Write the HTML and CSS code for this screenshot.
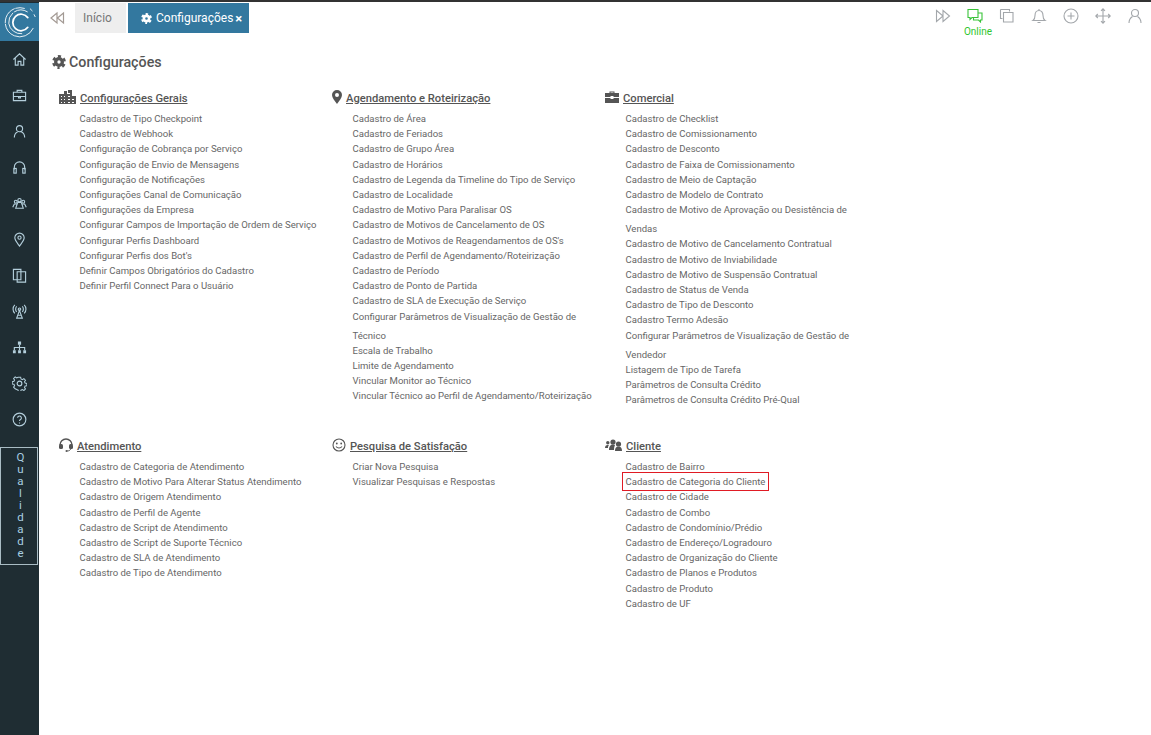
FILE: index.html
```html
<!DOCTYPE html>
<html lang="pt-BR">
<head>
    <meta charset="UTF-8">
    <meta name="viewport" content="width=device-width, initial-scale=1.0">
    <title>Configurações</title>
    <link rel="stylesheet" href="styles.css">
</head>
<body>
    <svg class="icon-defs" width="0" height="0">
        <symbol id="gear" viewBox="0 0 16 16">
            <circle cx="8" cy="8" r="3.800" fill="none" stroke="currentColor" stroke-width="3.800"/>
            <circle cx="8" cy="8" r="6.500" fill="none" stroke="currentColor" stroke-width="2.800" stroke-dasharray="3.600 3.207" stroke-dashoffset="1.800" transform="rotate(90 8 8)"/>
        </symbol>
    </svg>

    <aside class="sidebar">
        <div class="logo">
            <svg viewBox="0 0 39 39" width="38" height="38" fill="none" stroke="#fff" stroke-linecap="round">
                <path d="M24 5.500A15 15 0 1 0 33 26" stroke-width=".9" stroke-dasharray="9 1.500 18 1.500 40 2"/>
                <path d="M27 9A12.500 12.500 0 0 0 8 21a12.500 12.500 0 0 0 20 8" stroke-width=".9" stroke-dasharray="14 2 30"/>
                <path d="M27.500 15A8.500 8.500 0 1 0 27.500 25" stroke-width="1.800"/>
                <path d="M30 6l2 2M34 12l1 2" stroke-width=".9"/>
            </svg>
        </div>
        <nav class="side-nav">
            <a class="side-item"><svg viewBox="0 0 16 16"><path d="M1.500 8L8 2l6.500 6M3.500 6.500V14h3v-4h3v4h3V6.500"/></svg></a>
            <a class="side-item"><svg viewBox="0 0 16 16"><path d="M1.500 4.500h13v9h-13zM5.500 4.500V2.500h5v2M1.500 9h13M7 9v1.500h2V9"/></svg></a>
            <a class="side-item"><svg viewBox="0 0 16 16"><circle cx="8" cy="5" r="3.300"/><path d="M2.500 14.500c0-4 2-5.500 3.500-6M13.500 14.500c0-4-2-5.500-3.500-6"/></svg></a>
            <a class="side-item"><svg viewBox="0 0 16 16"><path d="M2.500 10V7.500a5.500 5.500 0 0 1 11 0V10"/><rect x="2" y="9" width="2.500" height="5"/><rect x="11.500" y="9" width="2.500" height="5"/></svg></a>
            <a class="side-item"><svg viewBox="0 0 16 16"><circle cx="8" cy="4.500" r="1.800"/><circle cx="4" cy="6" r="1.500"/><circle cx="12" cy="6" r="1.500"/><path d="M.8 12l1.700-3.500h3L4 13h8l-1.500-4.500h3l1.700 3.500M5.500 8l1-1.200h3l1 1.200"/></svg></a>
            <a class="side-item"><svg viewBox="0 0 16 16"><path d="M8 15C5 11 3 8.800 3 6.200a5 5 0 0 1 10 0C13 8.800 11 11 8 15z"/><circle cx="8" cy="6" r="1.700"/></svg></a>
            <a class="side-item"><svg viewBox="0 0 16 16"><path d="M1.500 1.500h8v11h-8z"/><path d="M5.500 4h9v11h-9z"/></svg></a>
            <a class="side-item"><svg viewBox="0 0 16 16"><path d="M8 7l-3 8h6zM6 12h4"/><circle cx="8" cy="5.500" r="1.300"/><path d="M5 2.500c-1.500 1.500-1.500 4.500 0 6M11 2.500c1.500 1.500 1.500 4.500 0 6M3 1c-2.500 2.500-2.500 6.500 0 9M13 1c2.500 2.500 2.500 6.500 0 9"/></svg></a>
            <a class="side-item"><svg viewBox="0 0 16 16"><path d="M8 5v3M2.500 11V8h11v3M8 8v3"/><path class="solid" d="M6.300 1.500h3.400V5H6.300zM1 11h3v3H1zM6.500 11h3v3h-3zM12 11h3v3h-3z"/></svg></a>
            <a class="side-item"><svg viewBox="0 0 16 16"><circle cx="8" cy="8" r="2.500"/><path d="M6.700 1h2.600l.4 2 1.500.7 1.800-1.100 1.800 1.800-1.100 1.800.7 1.500 2 .4v2.600l-2 .4-.7 1.500 1.100 1.800-1.800 1.800-1.800-1.100-1.500.7-.4 2H6.700l-.4-2-1.500-.7L3 14.200l-1.800-1.800 1.100-1.800-.7-1.500-2-.4V6.100l2-.4.7-1.500-1.100-1.800L3 .6l1.800 1.100 1.500-.7z" transform="translate(.6 .4) scale(.93)"/></svg></a>
            <a class="side-item"><svg viewBox="0 0 16 16"><circle cx="8" cy="8" r="6.800"/><path d="M6 6.200a2 2 0 1 1 3 1.800c-.8.500-1 .9-1 1.700M8 11.200v1"/></svg></a>
        </nav>
        <a class="side-quality">
            <span>Q</span><span>u</span><span>a</span><span>l</span><span>i</span><span>d</span><span>a</span><span>d</span><span>e</span>
        </a>
    </aside>

    <div class="content">
        <header class="topbar">
            <a class="back-btn">
                <svg viewBox="0 0 16 16" width="16" height="16"><path d="M8 3L2 8l6 5zM14.500 3l-6 5 6 5z"/></svg>
            </a>
            <a class="tab">Início</a>
            <a class="tab tab-active">
                <svg class="gear-icon" width="11" height="11"><use href="#gear"/></svg>
                <span>Configurações</span>
                <b class="tab-close">×</b>
            </a>
            <div class="top-actions">
                <a class="action"><svg viewBox="0 0 16 16"><path d="M1.500 2.500l6.500 5.500-6.500 5.500zM8 2.500l6.500 5.500L8 13.500z"/></svg></a>
                <a class="action action-online">
                    <svg viewBox="0 0 16 16"><path d="M1 1.500h10v8H5l-2 2v-2H1z"/><path d="M11 5h4v7h-1.500v2l-2-2H6.500v-2.500"/></svg>
                    <span>Online</span>
                </a>
                <a class="action"><svg viewBox="0 0 16 16"><path d="M1.500 1.500h9v2M1.500 1.500v9h2"/><path d="M4.500 4.500h9.500v9.500H4.500z"/></svg></a>
                <a class="action"><svg viewBox="0 0 16 16"><path d="M2 12.500h12c-1.500-1-2-2-2-5 0-3-1.500-5-4-5s-4 2-4 5c0 3-.5 4-2 5zM8 1v1.500M6.500 14.500h3"/></svg></a>
                <a class="action"><svg viewBox="0 0 16 16"><circle cx="8" cy="8" r="7"/><path d="M8 4.500v7M4.500 8h7"/></svg></a>
                <a class="action"><svg viewBox="0 0 16 16"><path d="M8 .8v14.400M.8 8h14.400M6 2.800L8 .8l2 2M6 13.200l2 2 2-2M2.800 6l-2 2 2 2M13.200 6l2 2-2 2"/></svg></a>
                <a class="action"><svg viewBox="0 0 16 16"><circle cx="8" cy="5" r="3.500"/><path d="M2 15c0-4 2-5.500 3.500-6.500M14 15c0-4-2-5.500-3.500-6.500"/></svg></a>
            </div>
        </header>

        <main class="page">
            <h1 class="page-title"><svg class="gear-icon" width="14" height="14"><use href="#gear"/></svg>Configurações</h1>

            <div class="sections">
                <section class="section">
                    <h2 class="section-title">
                        <svg viewBox="0 0 17 14" width="17" height="14"><path d="M1 4h4V1h3v3h1V0h4v6h4v8H0V4zm1 2v1h1V6zm0 3v1h1V9zm0 3v1h1v-1zm3-6v1h1V6zm0 3v1h1V9zm0 3v1h1v-1zm4-9v1h2V3zm0 3v1h2V6zm0 3v1h2V9zm0 3v1h2v-1zm4-3v1h2V9zm0 3v1h2v-1z" fill-rule="evenodd"/></svg>
                        <span>Configurações Gerais</span>
                    </h2>
                    <ul class="link-list">
                        <li><a>Cadastro de Tipo Checkpoint</a></li>
                        <li><a>Cadastro de Webhook</a></li>
                        <li><a>Configuração de Cobrança por Serviço</a></li>
                        <li><a>Configuração de Envio de Mensagens</a></li>
                        <li><a>Configuração de Notificações</a></li>
                        <li><a>Configurações Canal de Comunicação</a></li>
                        <li><a>Configurações da Empresa</a></li>
                        <li><a>Configurar Campos de Importação de Ordem de Serviço</a></li>
                        <li><a>Configurar Perfis Dashboard</a></li>
                        <li><a>Configurar Perfis dos Bot's</a></li>
                        <li><a>Definir Campos Obrigatórios do Cadastro</a></li>
                        <li><a>Definir Perfil Connect Para o Usuário</a></li>
                    </ul>
                </section>

                <section class="section">
                    <h2 class="section-title title-narrow">
                        <svg viewBox="0 0 10 14" width="10" height="14"><path d="M5 0a5 5 0 0 1 5 5c0 2.500-2.500 5.500-5 9-2.500-3.500-5-6.500-5-9a5 5 0 0 1 5-5zm0 3a2 2 0 1 0 0 4 2 2 0 0 0 0-4z" fill-rule="evenodd"/></svg>
                        <span>Agendamento e Roteirização</span>
                    </h2>
                    <ul class="link-list">
                        <li><a>Cadastro de Área</a></li>
                        <li><a>Cadastro de Feriados</a></li>
                        <li><a>Cadastro de Grupo Área</a></li>
                        <li><a>Cadastro de Horários</a></li>
                        <li><a>Cadastro de Legenda da Timeline do Tipo de Serviço</a></li>
                        <li><a>Cadastro de Localidade</a></li>
                        <li><a>Cadastro de Motivo Para Paralisar OS</a></li>
                        <li><a>Cadastro de Motivos de Cancelamento de OS</a></li>
                        <li><a>Cadastro de Motivos de Reagendamentos de OS's</a></li>
                        <li><a>Cadastro de Perfil de Agendamento/Roteirização</a></li>
                        <li><a>Cadastro de Período</a></li>
                        <li><a>Cadastro de Ponto de Partida</a></li>
                        <li><a>Cadastro de SLA de Execução de Serviço</a></li>
                        <li><a>Configurar Parâmetros de Visualização de Gestão de Técnico</a></li>
                        <li><a>Escala de Trabalho</a></li>
                        <li><a>Limite de Agendamento</a></li>
                        <li><a>Vincular Monitor ao Técnico</a></li>
                        <li><a>Vincular Técnico ao Perfil de Agendamento/Roteirização</a></li>
                    </ul>
                </section>

                <section class="section">
                    <h2 class="section-title title-narrow">
                        <svg viewBox="0 0 14 12" width="14" height="12"><path d="M4.500 2V.5h5V2H14v4H8.500v-1h-3v1H0V2zm1 0h3V1.500h-3zM0 7h5.500v1h3V7H14v5H0z" fill-rule="evenodd"/></svg>
                        <span>Comercial</span>
                    </h2>
                    <ul class="link-list">
                        <li><a>Cadastro de Checklist</a></li>
                        <li><a>Cadastro de Comissionamento</a></li>
                        <li><a>Cadastro de Desconto</a></li>
                        <li><a>Cadastro de Faixa de Comissionamento</a></li>
                        <li><a>Cadastro de Meio de Captação</a></li>
                        <li><a>Cadastro de Modelo de Contrato</a></li>
                        <li><a>Cadastro de Motivo de Aprovação ou Desistência de Vendas</a></li>
                        <li><a>Cadastro de Motivo de Cancelamento Contratual</a></li>
                        <li><a>Cadastro de Motivo de Inviabilidade</a></li>
                        <li><a>Cadastro de Motivo de Suspensão Contratual</a></li>
                        <li><a>Cadastro de Status de Venda</a></li>
                        <li><a>Cadastro de Tipo de Desconto</a></li>
                        <li><a>Cadastro Termo Adesão</a></li>
                        <li><a>Configurar Parâmetros de Visualização de Gestão de Vendedor</a></li>
                        <li><a>Listagem de Tipo de Tarefa</a></li>
                        <li><a>Parâmetros de Consulta Crédito</a></li>
                        <li><a>Parâmetros de Consulta Crédito Pré-Qual</a></li>
                    </ul>
                </section>

                <section class="section">
                    <h2 class="section-title title-narrow">
                        <svg viewBox="0 0 14 14" width="14" height="14"><path d="M1 7a6 6 0 0 1 12 0" fill="none" stroke="currentColor" stroke-width="1.400"/><rect x="0" y="6" width="4" height="5" rx="1.500"/><rect x="10" y="6" width="4" height="5" rx="1.500"/><path d="M12 10c0 2-2 3-4 3" fill="none" stroke="currentColor"/><circle cx="7.500" cy="13" r="1"/></svg>
                        <span>Atendimento</span>
                    </h2>
                    <ul class="link-list">
                        <li><a>Cadastro de Categoria de Atendimento</a></li>
                        <li><a>Cadastro de Motivo Para Alterar Status Atendimento</a></li>
                        <li><a>Cadastro de Origem Atendimento</a></li>
                        <li><a>Cadastro de Perfil de Agente</a></li>
                        <li><a>Cadastro de Script de Atendimento</a></li>
                        <li><a>Cadastro de Script de Suporte Técnico</a></li>
                        <li><a>Cadastro de SLA de Atendimento</a></li>
                        <li><a>Cadastro de Tipo de Atendimento</a></li>
                    </ul>
                </section>

                <section class="section">
                    <h2 class="section-title title-narrow">
                        <svg viewBox="0 0 14 14" width="14" height="14"><circle cx="7" cy="7" r="6" fill="none" stroke="currentColor" stroke-width="1.100"/><circle cx="4.800" cy="5.500" r=".9"/><circle cx="9.200" cy="5.500" r=".9"/><path d="M4 8.500c1.500 2 4.500 2 6 0" fill="none" stroke="currentColor" stroke-width="1.100"/></svg>
                        <span>Pesquisa de Satisfação</span>
                    </h2>
                    <ul class="link-list">
                        <li><a>Criar Nova Pesquisa</a></li>
                        <li><a>Visualizar Pesquisas e Respostas</a></li>
                    </ul>
                </section>

                <section class="section">
                    <h2 class="section-title title-narrow">
                        <svg viewBox="0 0 17 12" width="17" height="12"><circle cx="2.800" cy="3.800" r="1.700"/><circle cx="8" cy="3" r="2.600"/><circle cx="13.500" cy="5" r="2.600"/><path d="M0 9c0-2 1-3 2.500-3H4C3 7 3 8 3 9zM4 11c0-3 1-5.500 4-5.500 1 0 1.500.3 2 .8-.7 1-1 3-1 4.700zM10 12c0-3 1-4.500 3.500-4.500S17 9 17 12z"/></svg>
                        <span>Cliente</span>
                    </h2>
                    <ul class="link-list">
                        <li><a>Cadastro de Bairro</a></li>
                        <li class="link-marked"><a>Cadastro de Categoria do Cliente</a></li>
                        <li><a>Cadastro de Cidade</a></li>
                        <li><a>Cadastro de Combo</a></li>
                        <li><a>Cadastro de Condomínio/Prédio</a></li>
                        <li><a>Cadastro de Endereço/Logradouro</a></li>
                        <li><a>Cadastro de Organização do Cliente</a></li>
                        <li><a>Cadastro de Planos e Produtos</a></li>
                        <li><a>Cadastro de Produto</a></li>
                        <li><a>Cadastro de UF</a></li>
                    </ul>
                </section>
            </div>
        </main>
    </div>
</body>
</html>
```

FILE: styles.css
```css
* {
    box-sizing: border-box;
}

html, body {
    height: 100%;
}

body {
    margin: 0;
    display: flex;
    height: 735px;
    overflow: hidden;
    border-top: 2px solid #333;
    font-family: Roboto, "Liberation Sans", sans-serif;
    color: #555;
    background: #fff;
}

.icon-defs {
    position: absolute;
}

/* Barra lateral */
.sidebar {
    width: 39px;
    flex-shrink: 0;
    background: #1f2d33;
}

.logo {
    height: 38px;
    margin-top: 1px;
    background: #33789f;
    display: flex;
    align-items: center;
    justify-content: center;
}

.side-nav {
    display: flex;
    flex-direction: column;
}

.side-item {
    height: 36.1px;
    display: flex;
    align-items: center;
    justify-content: center;
}

.side-item svg {
    width: 15px;
    height: 15px;
    fill: none;
    stroke: #b4cfdc;
    stroke-width: 1.2;
}

.side-item svg .solid {
    fill: #b4cfdc;
    stroke: none;
}

.side-quality {
    display: flex;
    flex-direction: column;
    align-items: center;
    width: 38px;
    height: 118px;
    margin-top: 9px;
    padding: 3px 0 0 3px;
    border: 1px solid #a9bcc4;
    color: #a9cfe2;
    font-size: 11.5px;
    line-height: 12px;
}

/* Topo */
.content {
    flex: 1;
    min-width: 0;
}

.topbar {
    display: flex;
    align-items: flex-start;
    height: 42px;
    padding-top: 1px;
}

.back-btn {
    width: 36px;
    height: 30px;
    display: flex;
    align-items: center;
    justify-content: center;
}

.back-btn svg {
    fill: none;
    stroke: #a39a94;
    stroke-width: 1.2;
}

.tab {
    height: 30px;
    padding: 0 8px;
    margin-right: 2px;
    display: flex;
    align-items: center;
    gap: 4px;
    font-size: 12px;
    color: #777;
    background: #eee;
    width: 51px;
}

.tab-active {
    width: 121px;
    padding-left: 13px;
    padding-right: 0;
    color: #fff;
    background: #33789f;
    white-space: nowrap;
}

.tab-close {
    margin-left: -2px;
    font-size: 13px;
    line-height: 1;
}

.gear-icon {
    flex-shrink: 0;
}

.top-actions {
    margin-left: auto;
    display: flex;
}

.action {
    width: 32px;
    display: flex;
    flex-direction: column;
    align-items: center;
    padding-top: 5px;
    font-size: 10px;
    color: #2fc62f;
}

.action svg {
    width: 16px;
    height: 16px;
    fill: none;
    stroke: #a3a7ab;
    stroke-width: 1.1;
    flex-shrink: 0;
}

.action-online svg {
    stroke: #39c339;
}

.action-online span {
    margin-top: 2px;
    margin-left: 6px;
}

/* Conteúdo */
.page {
    padding: 8px 0 0 13px;
}

.page-title {
    margin: 0;
    display: flex;
    align-items: center;
    gap: 3px;
    font-size: 14.25px;
    font-weight: 500;
    line-height: 20px;
    color: #555;
}

.sections {
    display: grid;
    grid-template-columns: repeat(3, 273px);
    grid-template-rows: 348px auto;
    margin-top: 16px;
    padding-left: 7px;
}

.section-title {
    margin: 0 0 1px;
    display: flex;
    align-items: center;
    gap: 4px;
    height: 20px;
    font-size: 11.2px;
    font-weight: 500;
    color: #555;
}

.section-title svg {
    fill: currentColor;
    flex-shrink: 0;
    margin-top: -3px;
}

.section-title span {
    text-decoration: underline;
}

.link-list {
    list-style: none;
    margin: 0;
    padding: 0 0 0 20.5px;
    width: 270px;
    font-size: 9.55px;
    line-height: 19px;
    color: #666;
}

.link-list li {
    margin-bottom: -3.8px;
}

.link-marked a {
    display: inline-block;
    height: 19px;
    margin-left: -4px;
    padding: 0 4px;
    box-shadow: inset 0 0 0 1px #e01b24;
}
```
